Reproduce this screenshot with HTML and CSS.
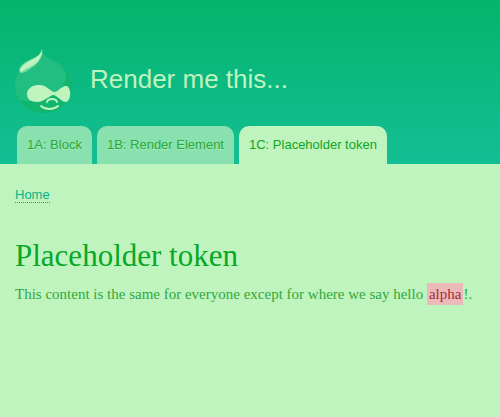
FILE: index.html
```html
<!DOCTYPE html>
<html lang="en">
<head>
<meta charset="utf-8">
<meta name="viewport" content="width=device-width, initial-scale=1">
<title>Placeholder token</title>
<link rel="stylesheet" href="styles.css">
</head>
<body>
<header class="header">
  <div class="branding">
    <svg class="logo" viewBox="0 0 60 66" aria-hidden="true">
      <path fill="#10b66d" d="M27 1C28 7 33 10 39 13C49 18 57 25 57 38C57 53 44 65 29 65C13 65 0 53 0 37C0 28 5 21 11 16C18 11 27 9 27 1Z"/>
      <path fill="#22bd80" d="M27 1C28 7 33 10 39 13C46 16 51 21 51 28C51 42 34 53 15 53C9 53 5 53 3 50C1 46 0 42 0 37C0 28 5 21 11 16C18 11 27 9 27 1Z"/>
      <path fill="#7cdba0" d="M27 1C28 8 24 15 18 19C13 22 10 25 6 25C3 24 4 19 8 16C15 10 26 10 27 1Z"/>
      <path fill="#bff4bf" d="M27 1C28 6 25 12 20 16C15 19 11 20 8 23C5 25 4 22 6 20C12 12 26 10 27 1Z"/>
      <path fill="#bff4bf" d="M23 37C31 36 35 43 39 44C43 44 47 37 52 38C57 41 56 53 51 54C46 54 42 47 38 47C34 48 30 53 23 54C15 54 12 51 12 46C12 41 17 37 23 37Z"/>
      <path class="logo-line" d="M32 54C33 50 41 50 42 54M26 58C31 62 38 62 43 58"/>
    </svg>
    <div class="site-name">Render me this...</div>
  </div>
  <nav class="tabs" aria-label="Main">
    <a class="tab" href="#block">1A: Block</a>
    <a class="tab" href="#element">1B: Render Element</a>
    <a class="tab tab-active" href="#token" aria-current="page">1C: Placeholder token</a>
  </nav>
</header>
<main class="content">
  <nav class="breadcrumb" aria-label="Breadcrumb"><a class="crumb" href="#home">Home</a></nav>
  <h1 class="title">Placeholder token</h1>
  <p class="text">This content is the same for everyone except for where we say hello <span class="token">alpha</span>!.</p>
</main>
</body>
</html>
```
FILE: styles.css
```css
body {
  margin: 0;
  background: #bff4bf;
  color: #31a83a;
  font-family: Georgia, "Liberation Serif", serif;
}

.header {
  padding: 48px 15px 0;
  background: linear-gradient(#04b46d, #14be94);
  font-family: "Helvetica Neue", "Liberation Sans", sans-serif;
}

.branding {
  display: flex;
  align-items: center;
  gap: 15px;
}

.logo {
  width: 60px;
  height: 66px;
}

.logo-line {
  fill: none;
  stroke: #bff4bf;
  stroke-width: 2;
  stroke-linecap: round;
}

.site-name {
  padding-bottom: 4px;
  color: #bff4bf;
  font-size: 26px;
  line-height: 32px;
}

.tabs {
  display: flex;
  gap: 5px;
  margin-top: 12px;
  padding: 0 2px;
}

.tab {
  padding: 0 10px;
  border-radius: 10px 10px 0 0;
  background: #89e1b0;
  color: #2ba837;
  font-size: 13px;
  line-height: 38px;
  text-decoration: none;
  text-shadow: 0 1px #a5eaba;
  white-space: nowrap;
}

.tab-active {
  background: #bff4bf;
  color: #10a524;
  text-shadow: none;
}

.content {
  padding: 23px 15px;
}

.breadcrumb {
  font-family: "Helvetica Neue", "Liberation Sans", sans-serif;
  font-size: 13px;
  line-height: 16px;
}

.crumb {
  border-bottom: 1px dotted;
  color: #08b385;
  text-decoration: none;
}

.title {
  margin: 35px 0 10px;
  color: #06a826;
  font-size: 31px;
  font-weight: 400;
  line-height: 36px;
}

.text {
  margin: 0;
  font-size: 15px;
  line-height: 20px;
}

.token {
  padding: 3px 2px;
  background: #ecb9b9;
  color: #a62c38;
}
```
